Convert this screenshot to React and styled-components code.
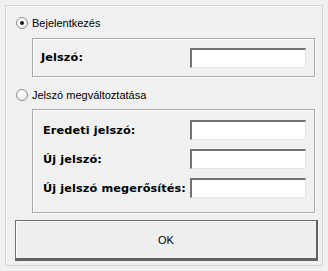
import React, { useState } from "react";
import styled, { createGlobalStyle } from "styled-components";

const GlobalStyle = createGlobalStyle`
  html, body {
    margin: 0;
    padding: 0;
    background: #f0f0f0;
  }
  body {
    font-family: "Liberation Sans", Arial, sans-serif;
    font-size: 11px;
    color: #000;
  }
`;

const Frame = styled.div`
  box-sizing: border-box;
  margin: 5px;
  width: 318px;
  height: 261px;
  border: 1px solid #d3d3d3;
  box-shadow: inset 1px 1px 0 #fbfbfb;
  display: flex;
  flex-direction: column;
`;

const RadioRow = styled.label`
  display: flex;
  align-items: center;
  height: 16px;
  margin-top: ${p => p.$top}px;
  margin-left: 10px;
  gap: 4px;
  cursor: default;
`;

const RadioDot = styled.span`
  box-sizing: border-box;
  width: 12px;
  height: 12px;
  border-radius: 50%;
  border: 1px solid #8e8f8f;
  background: radial-gradient(circle at 40% 40%, #ffffff 0%, #f4f4f4 50%, #dcdcdc 100%);
  display: flex;
  align-items: center;
  justify-content: center;

  &::after {
    content: "";
    width: 4px;
    height: 4px;
    border-radius: 50%;
    background: ${p => (p.$checked ? "#1a1a1a" : "transparent")};
  }
`;

const Group = styled.div`
  box-sizing: border-box;
  margin-top: ${p => p.$top}px;
  margin-left: 26px;
  width: 283px;
  height: ${p => p.$height}px;
  border: 1px solid #a9a9a9;
  box-shadow: 1px 1px 0 #ffffff, inset 1px 1px 0 #ffffff;
  display: flex;
  flex-direction: column;
  justify-content: ${p => (p.$center ? "center" : "flex-start")};
  padding: ${p => (p.$center ? "0 8px 0 8px" : "10px 8px 0 10px")};
  gap: 9px;
`;

const Field = styled.div`
  display: flex;
  align-items: center;
  justify-content: space-between;
  height: 20px;
`;

const Label = styled.span`
  font-family: "DejaVu Sans", Verdana, sans-serif;
  font-weight: bold;
  font-size: 11.3px;
  letter-spacing: 0.1px;
`;

const Input = styled.input`
  box-sizing: border-box;
  width: 116px;
  height: 20px;
  background: #fff;
  border: 1px solid #e3e3e3;
  border-top: 2px solid #727272;
  border-left: 2px solid #727272;
  outline: none;
  padding: 0 3px;
  font: inherit;
`;

const Button = styled.button`
  box-sizing: border-box;
  margin-top: 7px;
  margin-left: 9px;
  width: 303px;
  height: 41px;
  background: #efefef;
  border: 1px solid #6f6f6f;
  border-right: 2px solid #606060;
  border-bottom: 3px solid #606060;
  box-shadow: inset 1px 1px 0 #fdfdfd;
  font-family: "Liberation Sans", Arial, sans-serif;
  font-size: 11px;
  color: #000;
  padding: 0;
`;

export default function App() {
  const [mode, setMode] = useState("login");

  return (
    <>
      <GlobalStyle />
      <Frame>
        <RadioRow $top={9} onClick={() => setMode("login")}>
          <RadioDot $checked={mode === "login"} />
          Bejelentkezés
        </RadioRow>
        <Group $top={7} $height={39} $center>
          <Field>
            <Label>Jelszó:</Label>
            <Input type="password" />
          </Field>
        </Group>

        <RadioRow $top={10} onClick={() => setMode("change")}>
          <RadioDot $checked={mode === "change"} />
          Jelszó megváltoztatása
        </RadioRow>
        <Group $top={6} $height={104}>
          <Field>
            <Label>Eredeti jelszó:</Label>
            <Input type="password" />
          </Field>
          <Field>
            <Label>Új jelszó:</Label>
            <Input type="password" />
          </Field>
          <Field>
            <Label>Új jelszó megerősítés:</Label>
            <Input type="password" />
          </Field>
        </Group>

        <Button>OK</Button>
      </Frame>
    </>
  );
}
